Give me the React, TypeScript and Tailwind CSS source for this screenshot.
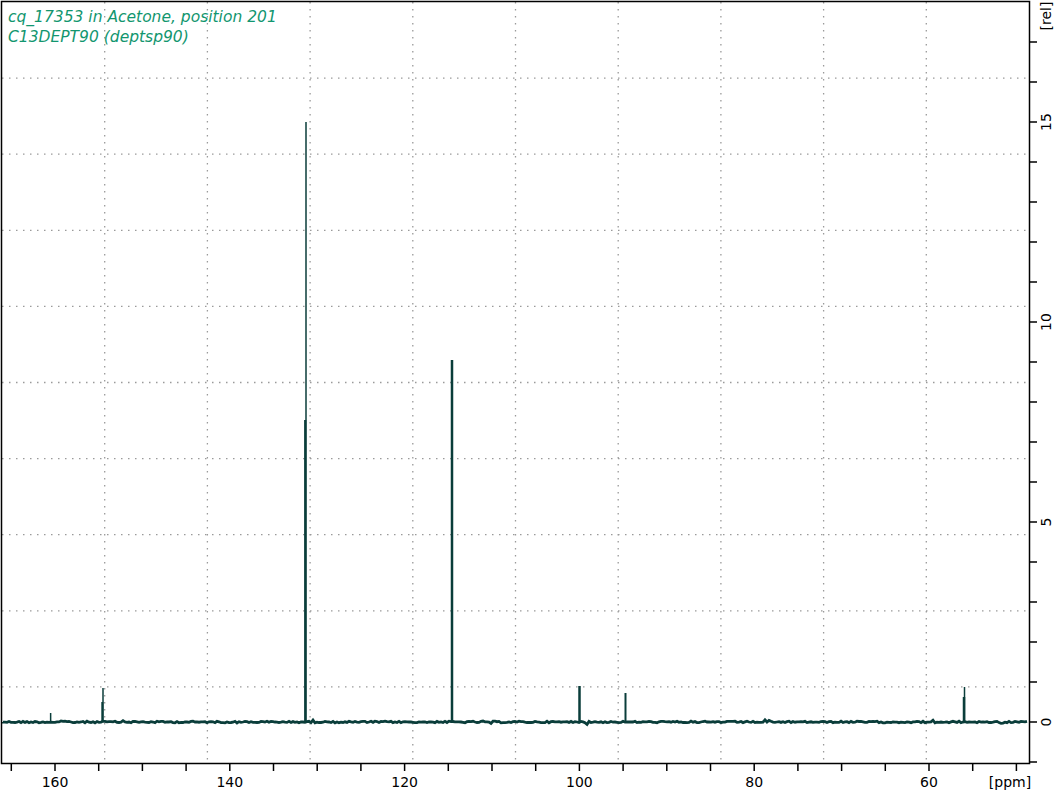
import React from "react";

const L = 2, R = 1029, T = 2, B = 763;
const xOf = (ppm: number) => 55 + (160 - ppm) * 8.74;
const yOf = (v: number) => 722 - v * 40;

function noisePath() {
  let s = 12345;
  const rnd = () => { s = (s * 1103515245 + 12345) % 2147483648; return s / 2147483648; };
  let d = `M${L + 1} 722`;
  for (let x = L + 1; x <= R - 1; x += 2) {
    const n = (rnd() - 0.5) * 1.6 + (rnd() < 0.04 ? (rnd() - 0.5) * 4 : 0);
    d += ` L${x} ${(722 + n).toFixed(1)}`;
  }
  return d;
}

export default function App() {
  const vgrid = Array.from({ length: 9 }, (_, i) => L + ((R - L) * (i + 1)) / 10);
  const hgrid = Array.from({ length: 9 }, (_, i) => T + ((B - T) * (i + 1)) / 10);
  const xticks: number[] = [];
  for (let p = 165; p >= 50; p -= 5) { const x = xOf(p); if (x > L && x < R) xticks.push(p); }
  const yticks: number[] = [];
  for (let v = -1; v <= 18; v++) { const y = yOf(v); if (y > T && y < B) yticks.push(v); }
  const peaks: [number, number, number][] = [
    [xOf(160.5), 713, 1.5],
    [103, 688, 1.5], [102.3, 702, 2],
    [306, 122, 1.5], [305.2, 420, 2.2],
    [452, 360, 2.5],
    [579.5, 686, 2.5],
    [625.5, 693, 2],
    [964.5, 687, 1.5], [964, 697, 2.5],
  ];
  return (
    <div className="w-[1060px] h-[793px] bg-white relative overflow-hidden">
      <svg width="1060" height="793" className="block">
        <g stroke="#9a9a9a" strokeWidth="1.3" strokeDasharray="1.5 5.5">
          {vgrid.map((x) => <line key={"v" + x} x1={x} y1={T} x2={x} y2={B} />)}
          {hgrid.map((y) => <line key={"h" + y} x1={L} y1={y} x2={R} y2={y} />)}
        </g>
        <path d={noisePath()} fill="none" stroke="#0a3d3a" strokeWidth="2.8" />
        {peaks.map(([x, top, w], i) => (
          <line key={i} x1={x} y1={722} x2={x} y2={top} stroke="#0a3d3a" strokeWidth={w} />
        ))}
        <rect x={L - 0.5} y={T - 0.5} width={R - L + 1} height={B - T + 1} fill="none" stroke="#000" strokeWidth="1.5" />
        <g stroke="#000" strokeWidth="1.5">
          {xticks.map((p) => <line key={p} x1={xOf(p)} y1={B} x2={xOf(p)} y2={B + 8} />)}
          {yticks.map((v) => <line key={v} x1={R} y1={yOf(v)} x2={R + 8} y2={yOf(v)} />)}
        </g>
        <g fontFamily="'DejaVu Sans', sans-serif" fontSize="14" fill="#000">
          {[160, 140, 120, 100, 80, 60].map((p) => (
            <text key={p} x={xOf(p)} y={787} textAnchor="middle">{p}</text>
          ))}
          <text x={1010} y={787} textAnchor="middle">[ppm]</text>
          {[0, 5, 10, 15].map((v) => (
            <text key={v} transform={`translate(1051 ${yOf(v)}) rotate(-90)`} textAnchor="middle">{v}</text>
          ))}
          <text transform="translate(1051 16) rotate(-90)" textAnchor="middle">[rel]</text>
        </g>
        <g fontFamily="'DejaVu Sans', sans-serif" fontSize="15.5" fill="#12966f" fontStyle="italic">
          <text x={8} y={22}>cq_17353 in Acetone, position 201</text>
          <text x={8} y={42}>C13DEPT90 (deptsp90)</text>
        </g>
      </svg>
    </div>
  );
}
